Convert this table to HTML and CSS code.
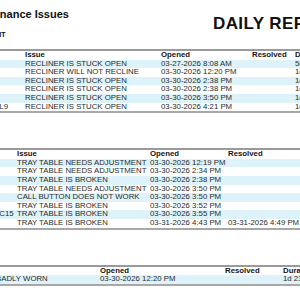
FILE: index.html
```html
<!DOCTYPE html>
<html>
<head>
<meta charset="utf-8">
<link rel="stylesheet" href="styles.css">
</head>
<body>
<div class="page">
  <header class="report-head">
    <div class="titles">
      <h1 class="title">Maintenance Issues</h1>
      <div class="subtitle">CABIN UNIT</div>
    </div>
    <div class="report-name">DAILY REPORT</div>
  </header>

  <section class="section">
    <table class="issues t1">
      <colgroup><col class="c-seat"><col class="c-issue"><col class="c-open"><col class="c-res"><col class="c-dur"></colgroup>
      <thead><tr><th></th><th>Issue</th><th>Opened</th><th>Resolved</th><th>Duration</th></tr></thead>
      <tbody>
        <tr><td>3C</td><td>RECLINER IS STUCK OPEN</td><td>03-27-2026 8:08 AM</td><td></td><td>5d 8h</td></tr>
        <tr><td>12A</td><td>RECLINER WILL NOT RECLINE</td><td>03-30-2026 12:20 PM</td><td></td><td>1d 23h</td></tr>
        <tr><td>7D</td><td>RECLINER IS STUCK OPEN</td><td>03-30-2026 2:38 PM</td><td></td><td>1d 21h</td></tr>
        <tr><td>7E</td><td>RECLINER IS STUCK OPEN</td><td>03-30-2026 2:38 PM</td><td></td><td>1d 21h</td></tr>
        <tr><td>9B</td><td>RECLINER IS STUCK OPEN</td><td>03-30-2026 3:50 PM</td><td></td><td>1d 20h</td></tr>
        <tr><td>GALLEY L9</td><td>RECLINER IS STUCK OPEN</td><td>03-30-2026 4:21 PM</td><td></td><td>1d 20h</td></tr>
      </tbody>
    </table>
  </section>

  <section class="section">
    <table class="issues t2">
      <colgroup><col class="c-seat"><col class="c-issue"><col class="c-open"><col class="c-res"><col class="c-dur"></colgroup>
      <thead><tr><th></th><th>Issue</th><th>Opened</th><th>Resolved</th><th>Duration</th></tr></thead>
      <tbody>
        <tr><td>2A</td><td>TRAY TABLE NEEDS ADJUSTMENT</td><td>03-30-2026 12:19 PM</td><td></td><td>1d 23h</td></tr>
        <tr><td>4C</td><td>TRAY TABLE NEEDS ADJUSTMENT</td><td>03-30-2026 2:34 PM</td><td></td><td>1d 21h</td></tr>
        <tr><td>6F</td><td>TRAY TABLE IS BROKEN</td><td>03-30-2026 2:38 PM</td><td></td><td>1d 21h</td></tr>
        <tr><td>8A</td><td>TRAY TABLE NEEDS ADJUSTMENT</td><td>03-30-2026 3:50 PM</td><td></td><td>1d 20h</td></tr>
        <tr><td>8B</td><td>CALL BUTTON DOES NOT WORK</td><td>03-30-2026 3:50 PM</td><td></td><td>1d 20h</td></tr>
        <tr><td>10D</td><td>TRAY TABLE IS BROKEN</td><td>03-30-2026 3:52 PM</td><td></td><td>1d 20h</td></tr>
        <tr><td>GALLEY C15</td><td>TRAY TABLE IS BROKEN</td><td>03-30-2026 3:55 PM</td><td></td><td>1d 20h</td></tr>
        <tr><td>14E</td><td>TRAY TABLE IS BROKEN</td><td>03-31-2026 4:43 PM</td><td>03-31-2026 4:49 PM</td><td>6m</td></tr>
      </tbody>
    </table>
  </section>

  <section class="section">
    <table class="issues t3">
      <colgroup><col class="c-issue"><col class="c-open"><col class="c-res"><col class="c-dur"></colgroup>
      <thead><tr><th>Issue</th><th>Opened</th><th>Resolved</th><th>Duration</th></tr></thead>
      <tbody>
        <tr><td>FLOOR BADLY WORN</td><td>03-30-2026 12:20 PM</td><td></td><td>1d 23h 40m</td></tr>
      </tbody>
    </table>
  </section>
</div>
</body>
</html>
```

FILE: styles.css
```css
html, body {
  margin: 0;
  padding: 0;
  background: #fff;
  overflow: hidden;
}

body {
  font-family: "Liberation Sans", Arial, Helvetica, sans-serif;
  color: #2b2b2b;
}

.page {
  margin-left: -35px;
  padding-top: 8px;
  width: 420px;
}

.report-head {
  display: grid;
  grid-template-columns: 248px auto;
  align-items: start;
}

.title {
  margin: 0;
  font-size: 11px;
  line-height: 13px;
  font-weight: bold;
  color: #111;
}

.subtitle {
  margin-top: 9px;
  font-size: 7px;
  line-height: 9px;
  font-weight: bold;
  color: #111;
}

.report-name {
  margin-top: 6px;
  font-size: 17px;
  line-height: 20px;
  font-weight: bold;
  color: #111;
  letter-spacing: 0.4px;
  white-space: nowrap;
}

.section {
  margin-top: 35px;
}

.section:first-of-type {
  margin-top: 10px;
}

.issues {
  border-collapse: collapse;
  table-layout: fixed;
  border-top: 2px solid #9a9a9a;
  border-bottom: 2px solid #a8a8a8;
  font-size: 7.8px;
}

.issues th,
.issues td {
  padding: 0 2px;
  height: 8.6px;
  line-height: 8.6px;
  text-align: left;
  white-space: nowrap;
  overflow: hidden;
}

.issues th {
  font-weight: bold;
  color: #151515;
}

.issues tbody tr:nth-child(odd) {
  background: #ddf2f9;
}

.t1 { width: 380px; }
.t1 .c-seat { width: 58px; }
.t1 .c-issue { width: 136px; }
.t1 .c-open { width: 91px; }
.t1 .c-res { width: 43px; }
.t1 .c-dur { width: 52px; }

.t2 { width: 400px; }
.t2 .c-seat { width: 50px; }
.t2 .c-issue { width: 133px; }
.t2 .c-open { width: 78px; }
.t2 .c-res { width: 80px; }
.t2 .c-dur { width: 59px; }

.t3 { width: 400px; }
.t3 .c-issue { width: 133px; }
.t3 .c-open { width: 125px; }
.t3 .c-res { width: 58px; }
.t3 .c-dur { width: 84px; }
```
